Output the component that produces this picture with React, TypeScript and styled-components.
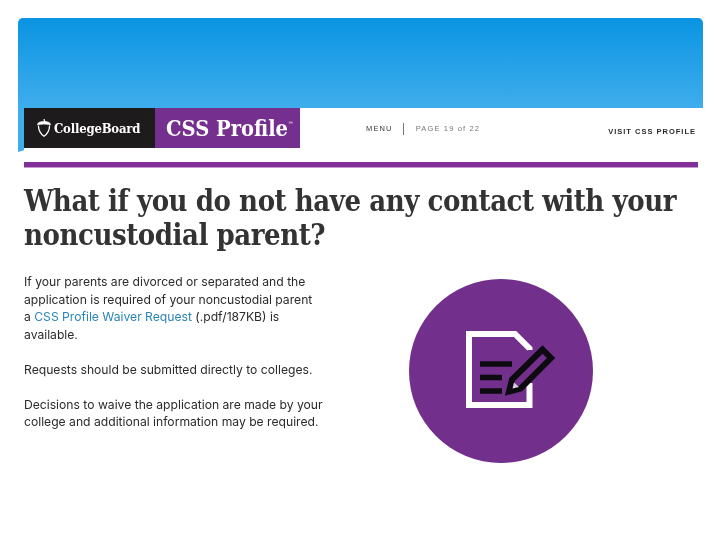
import React from "react";
import styled, { createGlobalStyle } from "styled-components";

const GlobalStyle = createGlobalStyle`
  html, body {
    margin: 0;
    padding: 0;
    background: #fff;
  }
`;

export default function App() {
  return (
    <>
      <GlobalStyle />
      <Slide>
        <Hero />
        <BannerRow>
          <HeroTail />
          <Banner>
            <BrandBlock>
              <AcornIcon />
              <BrandName>CollegeBoard</BrandName>
            </BrandBlock>
            <ProductBlock>
              CSS Profile<Tm>™</Tm>
            </ProductBlock>
            <PageNav>
              <NavLabel>MENU</NavLabel>
              <NavDivider />
              <PageCount>PAGE 19 of 22</PageCount>
            </PageNav>
            <VisitLink>VISIT CSS PROFILE</VisitLink>
          </Banner>
        </BannerRow>
        <Rule />
        <Heading>
          What if you do not have any contact with your
          <br />
          noncustodial parent?
        </Heading>
        <Content>
          <Copy>
            <Para>
              If your parents are divorced or separated and the
              <br />
              application is required of your noncustodial parent
              <br />a <WaiverLink>CSS Profile Waiver Request</WaiverLink> (.pdf/187KB) is
              <br />
              available.
            </Para>
            <Para>Requests should be submitted directly to colleges.</Para>
            <Para>
              Decisions to waive the application are made by your
              <br />
              college and additional information may be required.
            </Para>
          </Copy>
          <Badge>
            <FormIcon />
          </Badge>
        </Content>
      </Slide>
    </>
  );
}

function AcornIcon() {
  return (
    <svg width="16" height="20" viewBox="0 0 16 20" fill="none" stroke="#fff">
      <path d="M8 1 L8.8 4" strokeWidth="1.2" />
      <path d="M1.4 6.6 Q2 3.6 8 3.6 Q14 3.6 14.6 6.6 Q8 5.2 1.4 6.6 Z" fill="#fff" strokeWidth="0.8" />
      <path d="M2.4 7.4 Q2.6 14.5 8 18.2 Q13.4 14.5 13.6 7.4" strokeWidth="1.3" />
    </svg>
  );
}

function FormIcon() {
  return (
    <svg width="184" height="184" viewBox="0 0 184 184" fill="none">
      <path d="M120.5 71 V69.5 L106 55 H60 V126 H120.5 V104" stroke="#fff" strokeWidth="6" />
      <path d="M71 85 H103 M71 98.5 H93 M71 112 H93" stroke="#0d0a10" strokeWidth="5.5" />
      <path d="M100 112.5 L103 100.5 L133.5 70.5 L142 79 L111.5 109.5 Z" stroke="#0d0a10" strokeWidth="6" strokeLinejoin="miter" />
      <path d="M103.5 109.5 L105 103.5 L110 108 Z" fill="#d9cfe0" />
    </svg>
  );
}

const Slide = styled.div`
  width: 720px;
  height: 540px;
  padding: 18px 17px 0 18px;
  box-sizing: border-box;
  background: #fff;
  overflow: hidden;
  filter: blur(0.35px);
`;

const Hero = styled.div`
  height: 90px;
  border-radius: 5px 5px 0 0;
  background: linear-gradient(180deg, #0a94e2 0%, #3fadec 100%);
`;

const BannerRow = styled.div`
  display: flex;
  height: 45px;
`;

const HeroTail = styled.div`
  width: 6px;
  height: 44px;
  flex: none;
  background: #3fadec;
  clip-path: polygon(0 0, 100% 0, 100% 96%, 0 100%);
`;

const Banner = styled.div`
  display: flex;
  flex: 1;
  height: 40px;
`;

const BrandBlock = styled.div`
  display: flex;
  align-items: center;
  gap: 2px;
  width: 131px;
  padding: 0 0 0 12px;
  box-sizing: border-box;
  background: #1d1b1c;
`;

const BrandName = styled.span`
  font-family: "DejaVu Serif Condensed", "DejaVu Serif", serif;
  font-size: 13px;
  font-weight: 700;
  letter-spacing: -0.2px;
  color: #fff;
`;

const ProductBlock = styled.div`
  display: flex;
  align-items: center;
  width: 145px;
  padding-left: 11px;
  box-sizing: border-box;
  background: #752f8f;
  font-family: "DejaVu Serif Condensed", "DejaVu Serif", serif;
  font-size: 21.7px;
  font-weight: 700;
  color: #fff;
`;

const Tm = styled.span`
  font-size: 6px;
  align-self: flex-start;
  margin-top: 12px;
`;

const PageNav = styled.div`
  display: flex;
  align-items: center;
  align-self: center;
  margin: 1px 0 0 66px;
  font-family: "Liberation Sans", Arial, sans-serif;
  font-size: 7.5px;
  letter-spacing: 1.15px;
`;

const NavLabel = styled.span`
  color: #3a3a3a;
`;

const NavDivider = styled.span`
  width: 1px;
  height: 12px;
  margin: 0 12px 0 10px;
  background: #777;
`;

const PageCount = styled.span`
  color: #777;
`;

const VisitLink = styled.span`
  margin: 19px 0 0 128px;
  font-family: "Liberation Sans", Arial, sans-serif;
  font-size: 7.5px;
  font-weight: 700;
  letter-spacing: 1px;
  color: #2c2c2c;
  white-space: nowrap;
`;

const Rule = styled.div`
  height: 5px;
  margin: 9px 5px 0 6px;
  border-bottom: 1px solid #c79ad6;
  background: #822f97;
`;

const Heading = styled.h1`
  margin: 16px 0 0 6px;
  font-family: "DejaVu Serif Condensed", "DejaVu Serif", serif;
  font-size: 29px;
  font-weight: 700;
  letter-spacing: -0.45px;
  line-height: 34px;
  color: #333;
  white-space: nowrap;
`;

const Content = styled.div`
  display: flex;
  align-items: flex-start;
  margin: 0 0 0 6px;
`;

const Copy = styled.div`
  width: 385px;
  flex: none;
  padding-top: 21px;
`;

const Para = styled.p`
  margin: 0 0 17.5px;
  font-family: Inter, "Liberation Sans", sans-serif;
  font-size: 12.15px;
  line-height: 17.5px;
  color: #2b2b2b;
  white-space: nowrap;
`;

const WaiverLink = styled.span`
  color: #2a85b8;
`;

const Badge = styled.div`
  width: 184px;
  height: 184px;
  flex: none;
  margin-top: 27px;
  border-radius: 50%;
  background: #722f8b;
`;
